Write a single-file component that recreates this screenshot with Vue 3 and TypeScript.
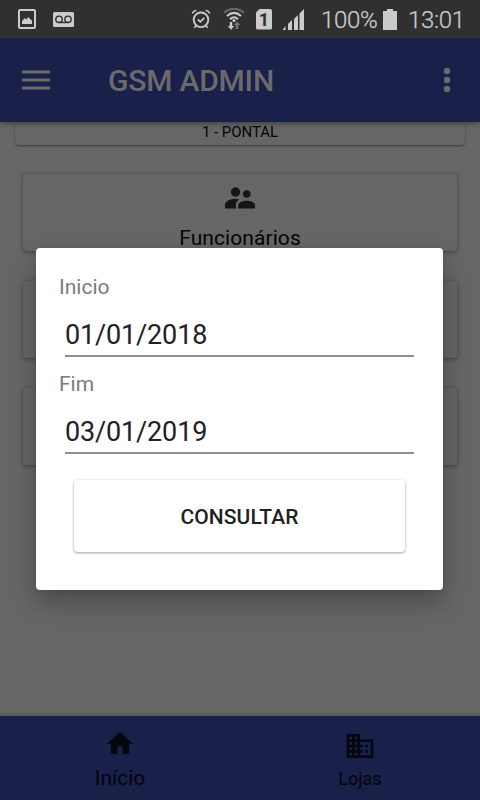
<script setup lang="ts">
import { ref } from 'vue'

interface DateField {
  label: string
  value: string
}

const fields = ref<DateField[]>([
  { label: 'Inicio', value: '01/01/2018' },
  { label: 'Fim', value: '03/01/2019' },
])
</script>

<template>
  <div class="screen">
    <header class="status">
      <svg class="s-image" viewBox="0 0 18 20">
        <rect x="1" y="1" width="16" height="18" rx="1" fill="none" stroke="#cbcbcb" stroke-width="2" />
        <path d="M4 15v-3l3-3 1.500 1.500L10.500 8l2 2.500 1.500 1V15z" fill="#cbcbcb" />
      </svg>
      <svg class="s-voice" viewBox="0 0 21 15">
        <rect width="21" height="15" rx="1.500" fill="#cbcbcb" />
        <g fill="none" stroke="#303030" stroke-width="1.400">
          <circle cx="6" cy="7.300" r="3.200" />
          <circle cx="15" cy="7.300" r="3.200" />
          <path d="M6 10.500h9" />
        </g>
      </svg>
      <span class="grow"></span>
      <svg class="s-alarm" viewBox="0 0 20 20">
        <g fill="none" stroke="#cbcbcb">
          <circle cx="10" cy="10.800" r="7.300" stroke-width="1.900" />
          <path d="M1.200 4.300Q2.500 1.800 5.300 1.200M18.800 4.300Q17.500 1.800 14.700 1.200M5 16.800l-1.700 2M15 16.800l1.700 2" stroke-width="1.600" />
          <path d="M6.800 10.300l2.500 2.500 4-4" stroke-width="1.800" />
        </g>
      </svg>
      <svg class="s-wifi" viewBox="0 0 22 22">
        <g fill="none" stroke-width="2">
          <path d="M1 4.500Q11-3 21 4.500" stroke="#696969" />
          <path d="M4 8Q11 1.800 18 8" stroke="#cbcbcb" />
          <path d="M7 11.200Q11 7.400 15 11.200" stroke="#cbcbcb" />
        </g>
        <circle cx="11" cy="12.500" r="1.500" fill="#cbcbcb" />
        <path d="M6.800 14h2.400v4h2l-3.200 3.800L4.800 18h2z" fill="#cbcbcb" />
        <path d="M12.800 21h2.400v-4h2l-3.200-3.500-3.200 3.500h2z" fill="#777" />
      </svg>
      <span class="sim">1</span>
      <svg class="s-signal" viewBox="0 0 21 21">
        <path d="M0 21v-1l2.500-2.500V21zM5 21v-6l4-4v10zM11 21V10l4-4v15zM16.500 21V4.500L21 0v21z" fill="#cbcbcb" />
      </svg>
      <span class="percent">100%</span>
      <svg class="s-battery" viewBox="0 0 14 21">
        <path d="M0 2h4V0h6v2h4v19H0z" fill="#cbcbcb" />
      </svg>
      <span class="clock">13:01</span>
    </header>

    <div class="toolbar">
      <svg class="burger" viewBox="0 0 28 21">
        <path d="M0 2h28M0 10h28M0 18h28" stroke="#6b6b6c" stroke-width="3.200" />
      </svg>
      <h1>GSM ADMIN</h1>
      <svg class="more" viewBox="0 0 8 26">
        <circle cx="4" cy="4" r="3.200" /><circle cx="4" cy="13" r="3.200" /><circle cx="4" cy="22" r="3.200" />
      </svg>
    </div>

    <main class="content">
      <div class="store">1 - PONTAL</div>
      <div class="card">
        <svg class="people" viewBox="0 0 30 22">
          <circle cx="10.500" cy="5" r="4.700" />
          <circle cx="21.800" cy="7" r="3.800" />
          <path d="M0 21.500v-3.700c0-3.900 6-6 10.500-6 1.300 0 2.500.2 3.700.5-2.200 1.500-3.300 3.500-3.300 5.800v3.400z" />
          <path d="M13.300 21.500v-3.200c0-3 4.500-4.500 8.400-4.500s8.300 1.500 8.300 4.500v3.200z" />
        </svg>
        <span>Funcionários</span>
      </div>
      <div class="card"></div>
      <div class="card"></div>
    </main>

    <nav class="tabs">
      <div class="tab home">
        <svg viewBox="2 3 20 17"><path d="M10 20v-6h4v6h5v-8h3L12 3 2 12h3v8z" /></svg>
        <span>Início</span>
      </div>
      <div class="tab shops">
        <svg viewBox="2 3 20 18"><path d="M12 7V3H2v18h20V7H12zM6 19H4v-2h2v2zm0-4H4v-2h2v2zm0-4H4V9h2v2zm0-4H4V5h2v2zm4 12H8v-2h2v2zm0-4H8v-2h2v2zm0-4H8V9h2v2zm0-4H8V5h2v2zm10 12h-8v-2h2v-2h-2v-2h2v-2h-2V9h8v10zm-2-8h-2v2h2v-2zm0 4h-2v2h2v-2z" /></svg>
        <span>Lojas</span>
      </div>
    </nav>

    <section class="dialog">
      <label v-for="f in fields" :key="f.label" class="field">
        <span class="label">{{ f.label }}</span>
        <input v-model="f.value" type="text" />
      </label>
      <button type="button">CONSULTAR</button>
    </section>
  </div>
</template>

<style>
body { margin: 0; }
</style>

<style scoped>
.screen { position: relative; width: 480px; height: 800px; display: flex; flex-direction: column; overflow: hidden; background: #666; font-family: Roboto, "Noto Sans", sans-serif; color: #050505; }
svg { display: block; flex: none; }
.status { height: 38px; flex: none; display: flex; align-items: center; padding: 0 17px 0 18px; box-sizing: border-box; background: #303030; color: #cbcbcb; font-size: 24px; z-index: 2; }
.grow { flex: 1; }
.s-image { width: 18px; height: 20px; }
.s-voice { width: 21px; height: 15px; margin-left: 17px; }
.s-alarm { width: 20px; height: 20px; margin-right: 12px; }
.s-wifi { width: 22px; height: 22px; margin-right: 11px; }
.sim { width: 16px; height: 21px; margin-right: 11px; border-radius: 2px; clip-path: polygon(4px 0, 100% 0, 100% 100%, 0 100%, 0 4px); background: #cbcbcb; color: #303030; font-size: 18px; font-weight: 700; line-height: 21px; text-align: center; }
.s-signal { width: 21px; height: 21px; margin-right: 17px; }
.percent { width: 57px; margin-right: 5px; line-height: 38px; padding-top: 2px; letter-spacing: -.3px; white-space: nowrap; font-weight: 300; -webkit-text-stroke: .25px #cbcbcb; }
.s-battery { width: 14px; height: 21px; margin-right: 11px; }
.clock { width: 55px; padding-top: 2px; white-space: nowrap; letter-spacing: -.3px; font-weight: 300; -webkit-text-stroke: .25px #cbcbcb; }
.toolbar { height: 84px; flex: none; display: flex; align-items: center; padding: 0 29px 0 22px; box-sizing: border-box; background: #192049; box-shadow: 0 2px 5px rgba(0,0,0,.35); z-index: 1; }
.burger { width: 28px; height: 21px; }
h1 { flex: 1; margin: 0 0 0 58px; font-size: 30px; line-height: 40px; font-weight: 500; letter-spacing: -.2px; color: #6b6b6c; padding-top: 1px; }
.more { width: 8px; height: 26px; fill: #6b6b6c; }
.content { flex: 1; min-height: 0; display: flex; flex-direction: column; padding: 0 23px; gap: 30px; }
.store { height: 23px; margin: 0 -8px -1px; box-sizing: border-box; border-radius: 0 0 4px 4px; text-align: center; font-size: 15px; line-height: 21px; letter-spacing: -.05px; box-shadow: 0 1px 2px rgba(0,0,0,.42); }
.card { height: 77px; flex: none; display: flex; flex-direction: column; align-items: center; box-sizing: border-box; padding-top: 13px; border-radius: 4px; background: #666; font-size: 21px; box-shadow: 0 1px 4px rgba(0,0,0,.4); }
.people { width: 30px; height: 22px; fill: #151515; }
.card span { line-height: 28px; margin-top: 15px; letter-spacing: .08px; }
.tabs { height: 84px; flex: none; display: grid; grid-template-columns: 1fr 1fr; background: #192049; box-shadow: 0 -1px 4px rgba(0,0,0,.2); color: #030409; }
.tab { display: flex; flex-direction: column; align-items: center; box-sizing: border-box; padding-top: 16px; }
.home svg { width: 26px; height: 22px; fill: #05060e; }
.home span { font-size: 21px; line-height: 28px; margin-top: 10px; }
.shops { padding-top: 18px; }
.shops svg { width: 28px; height: 24px; fill: #05060e; }
.shops span { font-size: 18px; line-height: 24px; margin-top: 9px; }
.dialog { position: absolute; left: 36px; top: 248px; width: 407px; height: 342px; z-index: 3; display: flex; flex-direction: column; box-sizing: border-box; padding: 24px 29px 0 23px; border-radius: 4px; background: #fff; box-shadow: 0 12px 26px rgba(0,0,0,.28), 0 1px 5px rgba(0,0,0,.08); }
.field { display: flex; flex-direction: column; height: 97px; flex: none; }
.label { font-size: 21px; line-height: 30px; color: #7b7b7b; }
input { margin: 14px 0 0 6px; width: 349px; height: 41px; box-sizing: border-box; padding: 0 0 2px; border: 0; border-bottom: 2px solid #909090; border-radius: 0; background: none; outline: 0; font: 400 27px/35px Roboto, sans-serif; letter-spacing: -.15px; color: #222; }
button { width: 331px; height: 72px; flex: none; margin: 14px 0 0 15px; padding: 2px 0 0; border: 0; border-radius: 4px; background: #fff; box-shadow: 0 1px 3px rgba(0,0,0,.38); color: #212121; font: 500 21px Roboto, sans-serif; letter-spacing: .1px; }
</style>
